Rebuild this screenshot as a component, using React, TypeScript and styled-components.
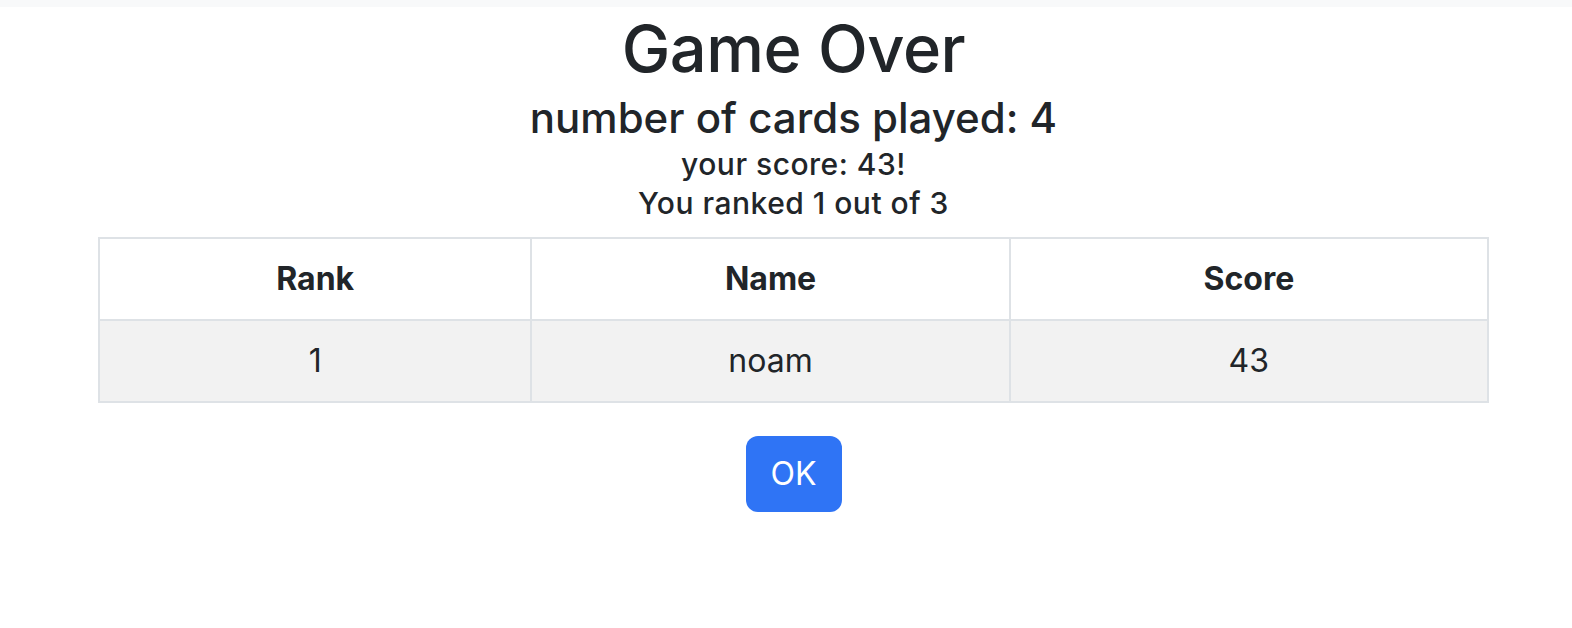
import React from "react";
import styled, { createGlobalStyle } from "styled-components";

const Global = createGlobalStyle`
  html, body { margin: 0; padding: 0; background: #fff; }
  body {
    font-family: Inter, "Noto Sans", "Liberation Sans", sans-serif;
    color: #212529;
  }
`;

const TopBar = styled.div`
  height: 7px;
  background: #f8f9fa;
`;

const Main = styled.main`
  display: flex;
  flex-direction: column;
  align-items: center;
  padding: 3px 83px 0 98px;
`;

const Title = styled.h1`
  margin: 0;
  font-size: 65px;
  font-weight: 500;
  line-height: 78px;
  letter-spacing: -0.5px;
`;

const Subtitle = styled.h3`
  margin: 5px 0 2px;
  font-size: 42px;
  font-weight: 500;
  line-height: 50px;
`;

const Line = styled.div`
  font-size: 30px;
  font-weight: 500;
  line-height: 39px;
  letter-spacing: 0.5px;
`;

const Table = styled.table`
  margin-top: 14px;
  width: 1391px;
  border-collapse: collapse;
  font-size: 32px;
  line-height: 48px;
`;

const Cell = styled.td<{ $head?: boolean; $striped?: boolean }>`
  border: 2px solid #dee2e6;
  padding: 16px;
  text-align: center;
  font-weight: ${(p) => (p.$head ? 700 : 400)};
  background: ${(p) => (p.$striped ? "#f2f2f2" : "#fff")};
  color: #212529;
`;

const OkButton = styled.button`
  margin-top: 33px;
  width: 96px;
  height: 76px;
  border: none;
  border-radius: 12px;
  background: #2f74f5;
  color: #fff;
  font-family: inherit;
  font-size: 32px;
  line-height: 48px;
  cursor: pointer;
`;

const rows = [{ rank: 1, name: "noam", score: 43 }];

export default function App() {
  return (
    <>
      <Global />
      <TopBar />
      <Main>
        <Title>Game Over</Title>
        <Subtitle>number of cards played: 4</Subtitle>
        <Line>your score: 43!</Line>
        <Line>You ranked 1 out of 3</Line>
        <Table>
          <colgroup>
            <col style={{ width: 433 }} />
            <col style={{ width: 479 }} />
            <col style={{ width: 479 }} />
          </colgroup>
          <thead>
            <tr>
              <Cell as="th" $head>Rank</Cell>
              <Cell as="th" $head>Name</Cell>
              <Cell as="th" $head>Score</Cell>
            </tr>
          </thead>
          <tbody>
            {rows.map((r) => (
              <tr key={r.rank}>
                <Cell $striped>{r.rank}</Cell>
                <Cell $striped>{r.name}</Cell>
                <Cell $striped>{r.score}</Cell>
              </tr>
            ))}
          </tbody>
        </Table>
        <OkButton>OK</OkButton>
      </Main>
    </>
  );
}
